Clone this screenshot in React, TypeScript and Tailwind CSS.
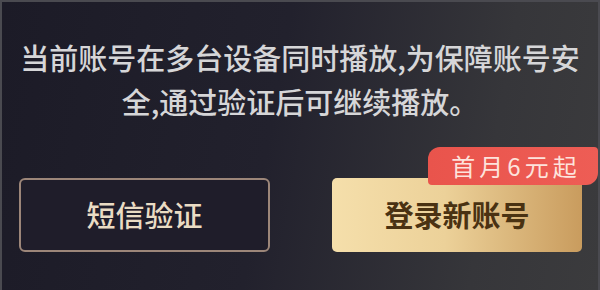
export default function App() {
  return (
    <div
      className="relative w-[600px] h-[290px] overflow-hidden border-t-2 border-l-2 border-r-2 border-[#4a4a50] bg-[linear-gradient(100deg,#1c1b27_0%,#22212d_45%,#36363a_80%,#3b3b3d_100%)]"
      style={{ fontFamily: '"Noto Sans CJK SC", "Noto Sans", sans-serif' }}
    >
      <p className="px-[12px] pt-[33px] text-center text-[29px] font-medium leading-[44px] text-[#d6d6d8]">
        当前账号在多台设备同时播放,为保障账号安全,通过验证后可继续播放。
      </p>

      <div className="mt-[55px] flex pl-[17px]">
        <button className="flex h-[74px] w-[251px] items-center justify-center rounded-[6px] border-2 border-[#9c8679] bg-[#1f1d2a] text-[29px] font-medium text-[#eadcc4]">
          短信验证
        </button>

        <div className="relative ml-[62px]">
          <button className="flex h-[74px] w-[250px] items-center justify-center rounded-[5px] bg-[linear-gradient(90deg,#f5dfab_0%,#ecd199_45%,#c99c5e_100%)] text-[29px] font-semibold text-[#4a3212]">
            登录新账号
          </button>
          <span className="absolute -top-[31px] -right-[16px] flex h-[38px] w-[170px] items-center justify-center rounded-tl-[12px] rounded-bl-[4px] rounded-tr-[4px] rounded-br-[12px] bg-[linear-gradient(90deg,#e9544c,#ee5d55)] pl-[6px] text-[24px] tracking-[4px] text-[#fde3dc]">
            首月6元起
          </span>
        </div>
      </div>
    </div>
  );
}
